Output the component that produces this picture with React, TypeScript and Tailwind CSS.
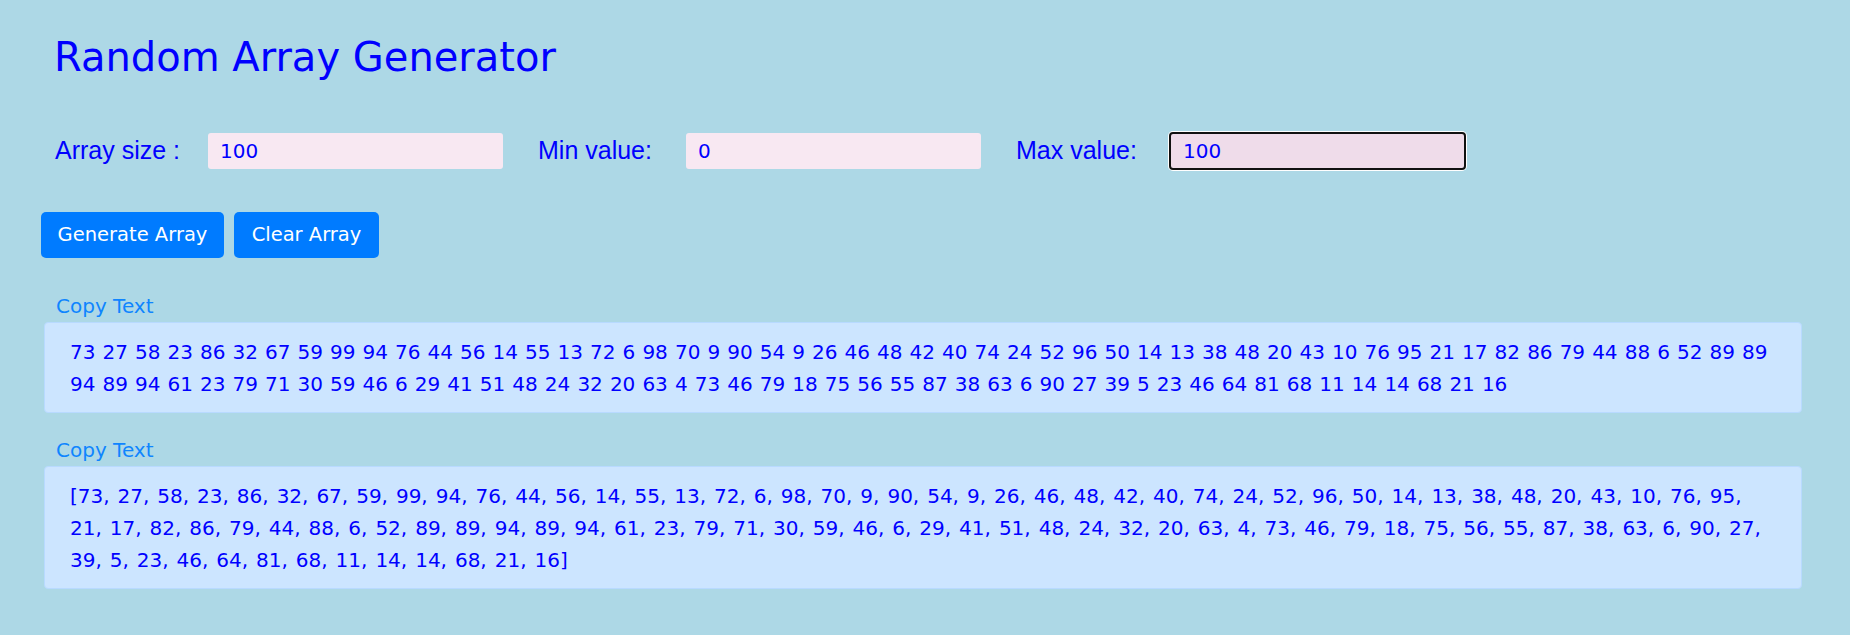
import { useEffect, useRef } from 'react'

const numbers = [
  73, 27, 58, 23, 86, 32, 67, 59, 99, 94, 76, 44, 56, 14, 55, 13, 72, 6, 98, 70, 9, 90, 54, 9, 26, 46, 48, 42, 40, 74,
  24, 52, 96, 50, 14, 13, 38, 48, 20, 43, 10, 76, 95, 21, 17, 82, 86, 79, 44, 88, 6, 52, 89, 89, 94, 89, 94, 61, 23,
  79, 71, 30, 59, 46, 6, 29, 41, 51, 48, 24, 32, 20, 63, 4, 73, 46, 79, 18, 75, 56, 55, 87, 38, 63, 6, 90, 27, 39, 5,
  23, 46, 64, 81, 68, 11, 14, 14, 68, 21, 16,
]

const verdana = "font-['DejaVu_Sans',Verdana,sans-serif]"

export default function App() {
  const maxRef = useRef<HTMLInputElement>(null)

  useEffect(() => {
    const el = maxRef.current
    if (el) {
      el.focus()
      el.setSelectionRange(3, 3)
    }
  }, [])

  return (
    <div className={`min-h-screen bg-[#add8e6] pt-[33px] ${verdana}`}>
      <h1 className="pl-[54px] text-[40px] leading-[48px] text-[#0000ff]">Random Array Generator</h1>

      <div className="mt-[52px] flex h-[36px] items-center pl-[55px] font-['Liberation_Sans',Arial,sans-serif] text-[25px] text-[#0000ff]">
        <label className="w-[153px] shrink-0">Array size :</label>
        <input
          defaultValue="100"
          className={`h-[36px] w-[295px] shrink-0 rounded-[3px] bg-[#f8e8f2] px-[12px] text-[20px] text-[#0000ff] outline-none ${verdana}`}
        />
        <label className="ml-[35px] w-[148px] shrink-0">Min value:</label>
        <input
          defaultValue="0"
          className={`h-[36px] w-[295px] shrink-0 rounded-[3px] bg-[#f8e8f2] px-[12px] text-[20px] text-[#0000ff] outline-none ${verdana}`}
        />
        <label className="ml-[35px] w-[153px] shrink-0">Max value:</label>
        <input
          ref={maxRef}
          defaultValue="100"
          className={`h-[38px] w-[297px] shrink-0 rounded-[4px] border-2 border-[#111] bg-[#efdcea] px-[12px] text-[20px] text-[#0000ff] caret-[#0000ff] shadow-[0_0_0_1px_#fff] outline-none ${verdana}`}
        />
      </div>

      <div className="mt-[43px] flex gap-[10px] pl-[41px]">
        <button className="h-[46px] w-[183px] rounded-[5px] bg-[#007bff] text-[19.5px] text-white">Generate Array</button>
        <button className="h-[46px] w-[145px] rounded-[5px] bg-[#007bff] text-[19.5px] text-white">Clear Array</button>
      </div>

      <div className="ml-[44px] mr-[48px]">
        <div className="mt-[36px] pl-[12px] text-[20px] leading-[24px] text-[#0f85ff]">Copy Text</div>
        <div className="mt-[4px] rounded-[4px] border border-[#b8daff] bg-[#cce5ff] px-[25px] pb-[12px] pt-[13px] text-[20px] leading-[32px] text-[#0000ff] [word-spacing:0.7px]">
          {numbers.join(' ')}
        </div>

        <div className="mt-[25px] pl-[12px] text-[20px] leading-[24px] text-[#0f85ff]">Copy Text</div>
        <div className="mt-[4px] rounded-[4px] border border-[#b8daff] bg-[#cce5ff] px-[25px] pb-[12px] pt-[13px] text-[20px] leading-[32px] text-[#0000ff] [word-spacing:1.6px]">
          [{numbers.join(', ')}]
        </div>
      </div>
    </div>
  )
}
